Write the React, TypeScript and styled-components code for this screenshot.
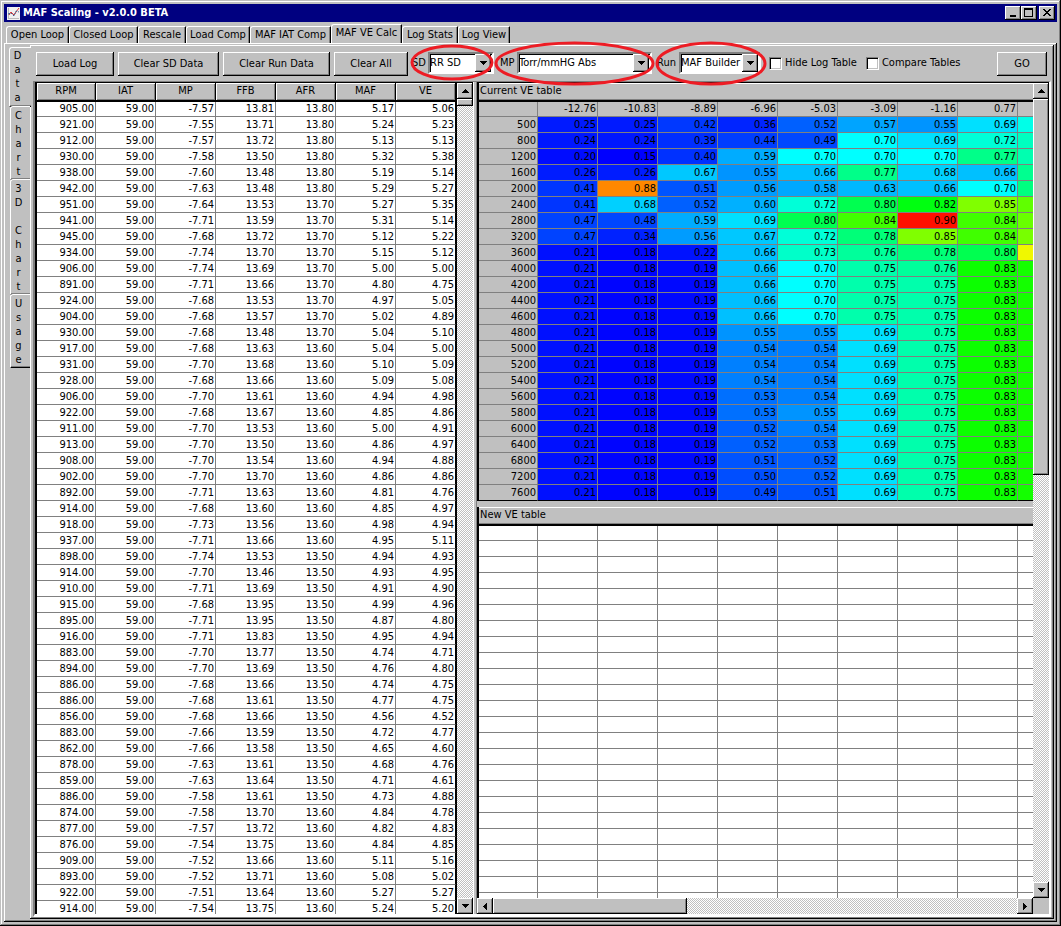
import React from 'react';
import styled, { createGlobalStyle, css } from 'styled-components';

const FACE = '#c0c0c0';
const SHADE = '#808080';

const GlobalStyle = createGlobalStyle`
  *, *::before, *::after { box-sizing: border-box; }
  body { margin: 0; background: ${FACE}; }
  body, button, select, input, table {
    font-family: 'DejaVu Sans Condensed', 'Noto Sans', sans-serif;
    font-size: 11px;
    line-height: 14px;
    color: #000;
  }
`;

const raised = css`
  background: ${FACE};
  border: 0;
  border-radius: 0;
  box-shadow: inset -1px -1px #000, inset 1px 1px #fff, inset -2px -2px ${SHADE};
`;

/* ---------- window frame ---------- */

const Window = styled.div`
  display: flex;
  flex-direction: column;
  height: 100vh;
  padding: 4px;
  background: ${FACE};
  box-shadow: inset -1px -1px #000, inset 0 1px ${FACE}, inset 1px 0 ${FACE},
    inset -2px -2px ${SHADE}, inset 2px 2px #fff;
`;

const TitleBar = styled.header`
  display: flex;
  align-items: center;
  flex: none;
  height: 18px;
  padding: 0 2px 0 3px;
  background: #000080;
`;

const Title = styled.h1`
  flex: 1;
  margin: 0 0 0 3px;
  color: #fff;
  font-size: 11px;
  line-height: 18px;
  font-weight: bold;
`;

const CaptionButton = styled.button<{ $apart?: boolean }>`
  ${raised}
  display: grid;
  place-items: center;
  width: 16px;
  height: 14px;
  padding: 0;
  margin-left: ${(p) => (p.$apart ? 2 : 0)}px;
`;

/* ---------- tabs ---------- */

const TabStrip = styled.nav`
  display: flex;
  align-items: flex-end;
  flex: none;
  height: 21px;
  padding-left: 2px;
`;

const Tab = styled.button<{ $width: number; $active?: boolean }>`
  flex: none;
  width: ${(p) => p.$width}px;
  height: ${(p) => (p.$active ? 19 : 17)}px;
  padding: 0 0 ${(p) => (p.$active ? 3 : 0)}px;
  background: ${FACE};
  border: solid;
  border-width: 1px 1px 0;
  border-color: #fff #000 #fff #fff;
  border-radius: 3px 1px 0 0;
  box-shadow: inset -1px 0 ${SHADE};
  white-space: nowrap;
`;

const TabPage = styled.main`
  display: flex;
  flex: 1;
  min-height: 0;
  padding: 2px 3px 3px 5px;
  box-shadow: inset -1px -1px #000, inset 1px 1px #fff, inset -2px -2px ${SHADE};
`;

const SideTabs = styled.nav`
  display: flex;
  flex-direction: column;
  flex: none;
  width: 21px;
  padding-top: 2px;
`;

const SideTab = styled.button<{ $active?: boolean }>`
  position: relative;
  display: flex;
  flex-direction: column;
  align-items: center;
  padding: ${(p) => (p.$active ? '1px 6px 1px 0' : '2px 4px 0 0')};
  background: ${FACE};
  border: solid;
  border-width: 1px 0 1px 1px;
  border-color: #fff #fff #000 #fff;
  border-radius: 3px 0 0 1px;
  margin-left: ${(p) => (p.$active ? 0 : 1)}px;
  margin-right: ${(p) => (p.$active ? -1 : 0)}px;
  margin-top: -1px;
  box-shadow: inset 0 -1px ${SHADE};

  &:first-child { margin-top: 0; }
`;

const Letter = styled.span`
  height: 14px;
`;

const DataPage = styled.section`
  display: flex;
  flex-direction: column;
  flex: 1;
  min-width: 0;
  padding: 2px 3px 2px 3px;
  box-shadow: inset -1px -1px #000, inset 1px 1px #fff, inset -2px -2px ${SHADE};
`;

/* ---------- toolbar ---------- */

const Toolbar = styled.div`
  display: flex;
  align-items: flex-start;
  flex: none;
  height: 34px;
  padding: 5px 0 0 3px;
`;

const PushButton = styled.button<{ $width: number }>`
  ${raised}
  flex: none;
  width: ${(p) => p.$width}px;
  height: 24px;
  padding: 0;
  margin-right: 4px;
  white-space: nowrap;
`;

const Picker = styled.div<{ $gap: number }>`
  position: relative;
  display: flex;
  align-items: center;
  flex: none;
  height: 22px;
  margin-right: ${(p) => p.$gap}px;
`;

const PickerLabel = styled.label<{ $width: number }>`
  width: ${(p) => p.$width}px;
  white-space: nowrap;
`;

const SelectFrame = styled.div<{ $width: number }>`
  position: relative;
  width: ${(p) => p.$width}px;
  height: 22px;
  border: 2px solid;
  border-color: ${SHADE} #fff #fff ${SHADE};
  background: #fff;
  box-shadow: inset 1px 1px #000;
`;

const Select = styled.select`
  appearance: none;
  width: 100%;
  height: 18px;
  padding: 0;
  border: 0;
  background: transparent;
  line-height: 18px;
`;

const DropArrow = styled.span`
  ${raised}
  position: absolute;
  top: 0;
  right: 1px;
  display: grid;
  place-items: center;
  width: 16px;
  height: 18px;
  pointer-events: none;
`;

const Ring = styled.svg<{ $x: number; $y: number }>`
  position: absolute;
  left: ${(p) => p.$x}px;
  top: ${(p) => p.$y}px;
  z-index: 2;
  pointer-events: none;
`;

const CheckLabel = styled.label`
  display: flex;
  align-items: center;
  flex: none;
  gap: 3px;
  height: 22px;
  margin-right: 9px;
  white-space: nowrap;
`;

const Check = styled.input`
  appearance: none;
  width: 13px;
  height: 13px;
  margin: 0;
  background: #fff;
  border: 1px solid;
  border-color: ${SHADE} #fff #fff ${SHADE};
  box-shadow: inset 1px 1px #000, inset -1px -1px ${FACE};
`;

const Spacer = styled.div`
  flex: 1;
`;

/* ---------- split area ---------- */

const Split = styled.div`
  display: flex;
  flex: 1;
  min-height: 0;
  border: 2px solid;
  border-color: ${SHADE} #fff #fff ${SHADE};
  border-top-width: 1px;
  border-bottom-width: 3px;
`;

const LogPane = styled.div`
  display: flex;
  flex: none;
  padding-left: 2px;
  background: #000;
  border-top: 1px solid #000;
`;

const Clip = styled.div<{ $grow?: boolean }>`
  flex: ${(p) => (p.$grow ? '1 1 0' : 'none')};
  min-width: 0;
  min-height: 0;
  overflow: hidden;
  background: #fff;
`;

const LogClip = styled(Clip)`
  border-right: 1px solid #000;
`;

const LogTable = styled.table`
  width: 419px;
  table-layout: fixed;
  border-collapse: separate;
  border-spacing: 0;

  th {
    width: 60px;
    height: 19px;
    padding: 0 0 1px;
    background: ${FACE};
    border-right: 1px solid #000;
    border-bottom: 2px solid #000;
    box-shadow: inset 1px 1px #fff, inset -1px -1px ${SHADE};
    font-weight: normal;
  }
  th:first-child { width: 59px; }

  td {
    height: 16px;
    padding: 1px 1px 0 0;
    border-right: 1px solid ${SHADE};
    border-bottom: 1px solid ${SHADE};
    text-align: right;
  }
  tbody tr:first-child td { height: 15px; padding-top: 0; }
  tr > :last-child { border-right-color: #000; }
`;

const Divider = styled.div`
  flex: none;
  width: 4px;
  background: ${FACE};
  border-left: 1px solid #fff;
  border-right: 1px solid ${SHADE};
`;

const VePane = styled.div`
  display: flex;
  flex: 1;
  min-width: 0;
  border-top: 1px solid #000;
`;

const VeColumn = styled.div`
  display: flex;
  flex-direction: column;
  flex: 1;
  min-width: 0;
`;

const Framed = styled.div<{ $grow?: boolean }>`
  display: flex;
  flex-direction: column;
  flex: ${(p) => (p.$grow ? '1 1 0' : 'none')};
  min-height: 0;
  border-left: 2px solid #000;
`;

const Caption = styled.h2`
  flex: none;
  height: 19px;
  margin: 0;
  padding: 0 0 0 1px;
  background: ${FACE};
  border-bottom: 2px solid #000;
  box-shadow: inset 0 1px #fff, inset 0 -1px ${SHADE};
  font-size: 11px;
  line-height: 16px;
  font-weight: normal;
`;

const Gap = styled.div`
  flex: none;
  height: 6px;
  background: ${FACE};
`;

const VeTable = styled.table`
  width: 599px;
  table-layout: fixed;
  border-collapse: separate;
  border-spacing: 0;

  th, td {
    width: 60px;
    height: 16px;
    padding: 1px 1px 0 0;
    border-right: 1px solid ${SHADE};
    border-bottom: 1px solid ${SHADE};
    font-weight: normal;
    text-align: right;
  }
  tr:first-child > * { height: 15px; padding-top: 0; }
  tr:last-child > * { border-bottom-color: #000; }
  tr > :first-child { width: 59px; }
  th { background: ${FACE}; }
`;

const Heat = styled.td<{ $fill: string }>`
  background: ${(p) => p.$fill};
`;

/* ---------- scroll bars ---------- */

const ScrollBar = styled.div<{ $horizontal?: boolean }>`
  display: flex;
  flex: none;
  flex-direction: ${(p) => (p.$horizontal ? 'row' : 'column')};
  ${(p) => (p.$horizontal ? 'height: 16px;' : 'width: 16px;')}
  background: repeating-conic-gradient(${FACE} 0 25%, #fff 0 50%) 0 0 / 2px 2px;
`;

const ScrollButton = styled.button`
  ${raised}
  display: grid;
  place-items: center;
  flex: none;
  width: 16px;
  height: 16px;
  padding: 0;
`;

const Rail = styled.div<{ $horizontal?: boolean }>`
  display: flex;
  flex: 1;
  flex-direction: ${(p) => (p.$horizontal ? 'row' : 'column')};
  min-height: 0;
`;

const Thumb = styled.div<{ $share: string }>`
  ${raised}
  flex: 0 0 ${(p) => p.$share};
`;

const Corner = styled.div`
  flex: none;
  height: 16px;
  background: ${FACE};
`;

const ARROWS = {
  up: 'M3 0h1v1h1v1h1v1h1v1H0V3h1V2h1V1h1z',
  down: 'M0 0h7v1H6v1H5v1H4v1H3V3H2V2H1V1H0z',
  left: 'M4 0v7H3V6H2V5H1V4H0V3h1V2h1V1h1V0z',
  right: 'M0 0h1v1h1v1h1v1h1v1H3v1H2v1H1v1H0z',
};

function Arrow({ to }: { to: keyof typeof ARROWS }) {
  const tall = to === 'left' || to === 'right';
  return (
    <svg width={tall ? 4 : 7} height={tall ? 7 : 4} shapeRendering="crispEdges" aria-hidden>
      <path d={ARROWS[to]} />
    </svg>
  );
}

function VerticalScroll({ share, corner }: { share: string; corner?: boolean }) {
  return (
    <ScrollBar>
      <ScrollButton aria-label="Scroll up"><Arrow to="up" /></ScrollButton>
      <Rail><Thumb $share={share} /></Rail>
      <ScrollButton aria-label="Scroll down"><Arrow to="down" /></ScrollButton>
      {corner && <Corner />}
    </ScrollBar>
  );
}

/* ---------- data ---------- */

const TABS: [string, number][] = [
  ['Open Loop', 63], ['Closed Loop', 69], ['Rescale', 48], ['Load Comp', 64],
  ['MAF IAT Comp', 81], ['MAF VE Calc', 71], ['Log Stats', 56], ['Log View', 52],
];

const SIDE_TABS = ['Data', 'Chart', '3D Chart', 'Usage'];

const LOG_COLUMNS = ['RPM', 'IAT', 'MP', 'FFB', 'AFR', 'MAF', 'VE'];

/* RPM, MP, FFB, AFR, MAF, VE; the intake temperature stays at 59 */
const LOG = `905 -7.57 13.81 13.80 5.17 5.06
921 -7.55 13.71 13.80 5.24 5.23
912 -7.57 13.72 13.80 5.13 5.13
930 -7.58 13.50 13.80 5.32 5.38
938 -7.60 13.48 13.80 5.19 5.14
942 -7.63 13.48 13.80 5.29 5.27
951 -7.64 13.53 13.70 5.27 5.35
941 -7.71 13.59 13.70 5.31 5.14
945 -7.68 13.72 13.70 5.12 5.22
934 -7.74 13.70 13.70 5.15 5.12
906 -7.74 13.69 13.70 5.00 5.00
891 -7.71 13.66 13.70 4.80 4.75
924 -7.68 13.53 13.70 4.97 5.05
904 -7.68 13.57 13.70 5.02 4.89
930 -7.68 13.48 13.70 5.04 5.10
917 -7.68 13.63 13.60 5.04 5.00
931 -7.70 13.68 13.60 5.10 5.09
928 -7.68 13.66 13.60 5.09 5.08
906 -7.70 13.61 13.60 4.94 4.98
922 -7.68 13.67 13.60 4.85 4.86
911 -7.70 13.53 13.60 5.00 4.91
913 -7.70 13.50 13.60 4.86 4.97
908 -7.70 13.54 13.60 4.94 4.88
902 -7.70 13.70 13.60 4.86 4.86
892 -7.71 13.63 13.60 4.81 4.76
914 -7.68 13.60 13.60 4.85 4.97
918 -7.73 13.56 13.60 4.98 4.94
937 -7.71 13.66 13.60 4.95 5.11
898 -7.74 13.53 13.50 4.94 4.93
914 -7.70 13.46 13.50 4.93 4.95
910 -7.71 13.69 13.50 4.91 4.90
915 -7.68 13.95 13.50 4.99 4.96
895 -7.71 13.95 13.50 4.87 4.80
916 -7.71 13.83 13.50 4.95 4.94
883 -7.70 13.77 13.50 4.74 4.71
894 -7.70 13.69 13.50 4.76 4.80
886 -7.68 13.66 13.50 4.74 4.75
886 -7.68 13.61 13.50 4.77 4.75
856 -7.68 13.66 13.50 4.56 4.52
883 -7.66 13.59 13.50 4.72 4.77
862 -7.66 13.58 13.50 4.65 4.60
878 -7.63 13.61 13.50 4.68 4.76
859 -7.63 13.64 13.50 4.71 4.61
886 -7.58 13.61 13.50 4.73 4.88
874 -7.58 13.70 13.60 4.84 4.78
877 -7.57 13.72 13.60 4.82 4.83
876 -7.54 13.75 13.60 4.84 4.85
909 -7.52 13.66 13.60 5.11 5.16
893 -7.52 13.71 13.60 5.08 5.02
922 -7.51 13.64 13.60 5.27 5.27
914 -7.54 13.75 13.60 5.24 5.20`
  .split('\n')
  .map((line) => {
    const [rpm, ...rest] = line.split(' ');
    return [`${rpm}.00`, '59.00', ...rest];
  });

const VE_COLUMNS = ['-12.76', '-10.83', '-8.89', '-6.96', '-5.03', '-3.09', '-1.16', '0.77'];

/* engine speed, eight cell values, fill of the ninth cell */
const VE = `500 0.25 0.25 0.42 0.36 0.52 0.57 0.55 0.69 #00ffe8
800 0.24 0.24 0.39 0.44 0.49 0.70 0.69 0.72 #00ffc0
1200 0.20 0.15 0.40 0.59 0.70 0.70 0.70 0.77 #00ffb0
1600 0.26 0.26 0.67 0.55 0.66 0.77 0.68 0.66 #00ff90
2000 0.41 0.88 0.51 0.56 0.58 0.63 0.66 0.70 #00ff80
2400 0.41 0.68 0.52 0.60 0.72 0.80 0.82 0.85 #60ff00
2800 0.47 0.48 0.59 0.69 0.80 0.84 0.90 0.84 #68ff00
3200 0.47 0.34 0.56 0.67 0.72 0.78 0.85 0.84 #78ff00
3600 0.21 0.18 0.22 0.66 0.73 0.76 0.78 0.80 #f0f800
4000 0.21 0.18 0.19 0.66 0.70 0.75 0.76 0.83 #14ff00
4200 0.21 0.18 0.19 0.66 0.70 0.75 0.75 0.83 #14ff00
4400 0.21 0.18 0.19 0.66 0.70 0.75 0.75 0.83 #14ff00
4600 0.21 0.18 0.19 0.66 0.70 0.75 0.75 0.83 #14ff00
4800 0.21 0.18 0.19 0.55 0.55 0.69 0.75 0.83 #14ff00
5000 0.21 0.18 0.19 0.54 0.54 0.69 0.75 0.83 #14ff00
5200 0.21 0.18 0.19 0.54 0.54 0.69 0.75 0.83 #14ff00
5400 0.21 0.18 0.19 0.54 0.54 0.69 0.75 0.83 #14ff00
5600 0.21 0.18 0.19 0.53 0.54 0.69 0.75 0.83 #14ff00
5800 0.21 0.18 0.19 0.53 0.55 0.69 0.75 0.83 #14ff00
6000 0.21 0.18 0.19 0.52 0.54 0.69 0.75 0.83 #14ff00
6400 0.21 0.18 0.19 0.52 0.53 0.69 0.75 0.83 #14ff00
6800 0.21 0.18 0.19 0.51 0.52 0.69 0.75 0.83 #14ff00
7200 0.21 0.18 0.19 0.50 0.52 0.69 0.75 0.83 #14ff00
7600 0.21 0.18 0.19 0.49 0.51 0.69 0.75 0.83 #14ff00`
  .split('\n')
  .map((line) => line.split(' '));

const STOPS: [number, number, number, number][] = [
  [0.15, 0, 0, 255], [0.18, 0, 4, 255], [0.21, 0, 16, 255], [0.26, 0, 28, 255],
  [0.36, 0, 36, 255], [0.42, 0, 56, 255], [0.49, 0, 72, 255], [0.51, 0, 84, 255],
  [0.52, 0, 96, 255], [0.54, 0, 128, 255], [0.55, 0, 148, 255], [0.57, 0, 164, 255],
  [0.6, 0, 176, 255], [0.66, 0, 192, 255], [0.68, 0, 208, 255], [0.69, 0, 224, 255],
  [0.7, 0, 255, 255], [0.72, 0, 255, 216], [0.75, 0, 255, 172], [0.78, 0, 255, 120],
  [0.8, 0, 255, 80], [0.82, 0, 255, 16], [0.83, 12, 255, 0], [0.84, 64, 255, 0],
  [0.85, 128, 255, 0], [0.88, 255, 136, 0], [0.9, 255, 16, 0],
];

function heat(value: number) {
  const at = Math.max(1, STOPS.findIndex((s) => s[0] >= value));
  const a = STOPS[at - 1];
  const b = STOPS[at];
  const t = (value - a[0]) / (b[0] - a[0]);
  const mix = (i: number) => Math.round(a[i] + (b[i] - a[i]) * t);
  return `rgb(${mix(1)}, ${mix(2)}, ${mix(3)})`;
}

const EMPTY_ROWS = Array.from({ length: 25 });
const EMPTY_CELLS = Array.from({ length: 10 });

/* ---------- parts ---------- */

interface ComboProps {
  id: string;
  label: string;
  value: string;
  labelWidth: number;
  width: number;
  gap: number;
  ring: { x: number; y: number; w: number; h: number };
}

function Combo({ id, label, value, labelWidth, width, gap, ring }: ComboProps) {
  return (
    <Picker $gap={gap}>
      <PickerLabel htmlFor={id} $width={labelWidth}>{label}</PickerLabel>
      <SelectFrame $width={width}>
        <Select id={id} defaultValue={value}><option>{value}</option></Select>
        <DropArrow><Arrow to="down" /></DropArrow>
      </SelectFrame>
      <Ring $x={ring.x} $y={ring.y} width={ring.w} height={ring.h} aria-hidden>
        <ellipse
          cx={ring.w / 2} cy={ring.h / 2} rx={ring.w / 2 - 2} ry={ring.h / 2 - 2}
          fill="none" stroke="#ed1c24" strokeWidth="3"
        />
      </Ring>
    </Picker>
  );
}

export default function App() {
  return (
    <>
      <GlobalStyle />
      <Window>
        <TitleBar>
          <svg width="13" height="13" aria-hidden>
            <rect width="13" height="13" fill="#f0f0f0" />
            <path d="M1.500 1v11M1 11.500h11" stroke="#bbb" fill="none" />
            <path d="M2 8l2-3 3 3 2-3 3-4" stroke="#d33" fill="none" />
            <path d="M1 7l3-1 3 3 2-5 3 1" stroke="#369" fill="none" strokeDasharray="2 1" />
          </svg>
          <Title>MAF Scaling - v2.0.0 BETA</Title>
          <CaptionButton aria-label="Minimize">
            <svg width="10" height="10" aria-hidden><path d="M2 7h6v2H2z" /></svg>
          </CaptionButton>
          <CaptionButton aria-label="Maximize">
            <svg width="10" height="10" aria-hidden><path d="M0 0h9v9H0zM1 2v6h7V2z" fillRule="evenodd" /></svg>
          </CaptionButton>
          <CaptionButton aria-label="Close" $apart>
            <svg width="10" height="10" shapeRendering="crispEdges" aria-hidden>
              <path d="M1 1h2v1h1v1h2V2h1V1h2v1H8v1H7v1H6v1h1v1h1v1h1v1H7V7H6V6H4v1H3v1H1V7h1V6h1V5h1V4H3V3H2V2H1z" />
            </svg>
          </CaptionButton>
        </TitleBar>
        <TabStrip>
          {TABS.map(([name, width]) => (
            <Tab key={name} $width={width} $active={name === 'MAF VE Calc'}>{name}</Tab>
          ))}
        </TabStrip>
        <TabPage>
          <SideTabs>
            {SIDE_TABS.map((name) => (
              <SideTab key={name} $active={name === 'Data'} aria-label={name}>
                {name.split('').map((c, i) => <Letter key={i}>{c}</Letter>)}
              </SideTab>
            ))}
          </SideTabs>
          <DataPage>
            <Toolbar>
              <PushButton $width={78}>Load Log</PushButton>
              <PushButton $width={101}>Clear SD Data</PushButton>
              <PushButton $width={107}>Clear Run Data</PushButton>
              <PushButton $width={74}>Clear All</PushButton>
              <Combo id="sd" label="SD" value="RR SD" labelWidth={16} width={66} gap={6}
                ring={{ x: -2, y: -8, w: 84, h: 37 }} />
              <Combo id="mp" label="MP" value="Torr/mmHG Abs" labelWidth={17} width={135} gap={5}
                ring={{ x: -6, y: -11, w: 161, h: 45 }} />
              <Combo id="run" label="Run" value="MAF Builder" labelWidth={22} width={82} gap={8}
                ring={{ x: -2, y: -11, w: 112, h: 45 }} />
              <CheckLabel><Check type="checkbox" />Hide Log Table</CheckLabel>
              <CheckLabel><Check type="checkbox" />Compare Tables</CheckLabel>
              <Spacer />
              <PushButton $width={50}>GO</PushButton>
            </Toolbar>
            <Split>
              <LogPane>
                <LogClip>
                  <LogTable>
                    <thead>
                      <tr>{LOG_COLUMNS.map((c) => <th key={c} scope="col">{c}</th>)}</tr>
                    </thead>
                    <tbody>
                      {LOG.map((row, r) => (
                        <tr key={r}>{row.map((cell, c) => <td key={c}>{cell}</td>)}</tr>
                      ))}
                    </tbody>
                  </LogTable>
                </LogClip>
                <VerticalScroll share="7px" />
              </LogPane>
              <Divider />
              <VePane>
                <VeColumn>
                  <Framed>
                    <Caption>Current VE table</Caption>
                    <Clip>
                      <VeTable>
                        <tbody>
                          <tr>
                            <th />
                            {VE_COLUMNS.map((c) => <th key={c} scope="col">{c}</th>)}
                            <th />
                          </tr>
                          {VE.map(([rpm, ...cells]) => (
                            <tr key={rpm}>
                              <th scope="row">{rpm}</th>
                              {cells.map((cell, c) =>
                                cell.startsWith('#')
                                  ? <Heat key={c} $fill={cell} />
                                  : <Heat key={c} $fill={heat(Number(cell))}>{cell}</Heat>
                              )}
                            </tr>
                          ))}
                        </tbody>
                      </VeTable>
                    </Clip>
                  </Framed>
                  <Gap />
                  <Framed $grow>
                    <Caption>New VE table</Caption>
                    <Clip $grow>
                      <VeTable>
                        <tbody>
                          {EMPTY_ROWS.map((_, r) => (
                            <tr key={r}>{EMPTY_CELLS.map((__, c) => <td key={c} />)}</tr>
                          ))}
                        </tbody>
                      </VeTable>
                    </Clip>
                  </Framed>
                  <ScrollBar $horizontal>
                    <ScrollButton aria-label="Scroll left"><Arrow to="left" /></ScrollButton>
                    <Rail $horizontal><Thumb $share="37%" /></Rail>
                    <ScrollButton aria-label="Scroll right"><Arrow to="right" /></ScrollButton>
                  </ScrollBar>
                </VeColumn>
                <VerticalScroll share="48%" corner />
              </VePane>
            </Split>
          </DataPage>
        </TabPage>
      </Window>
    </>
  );
}
